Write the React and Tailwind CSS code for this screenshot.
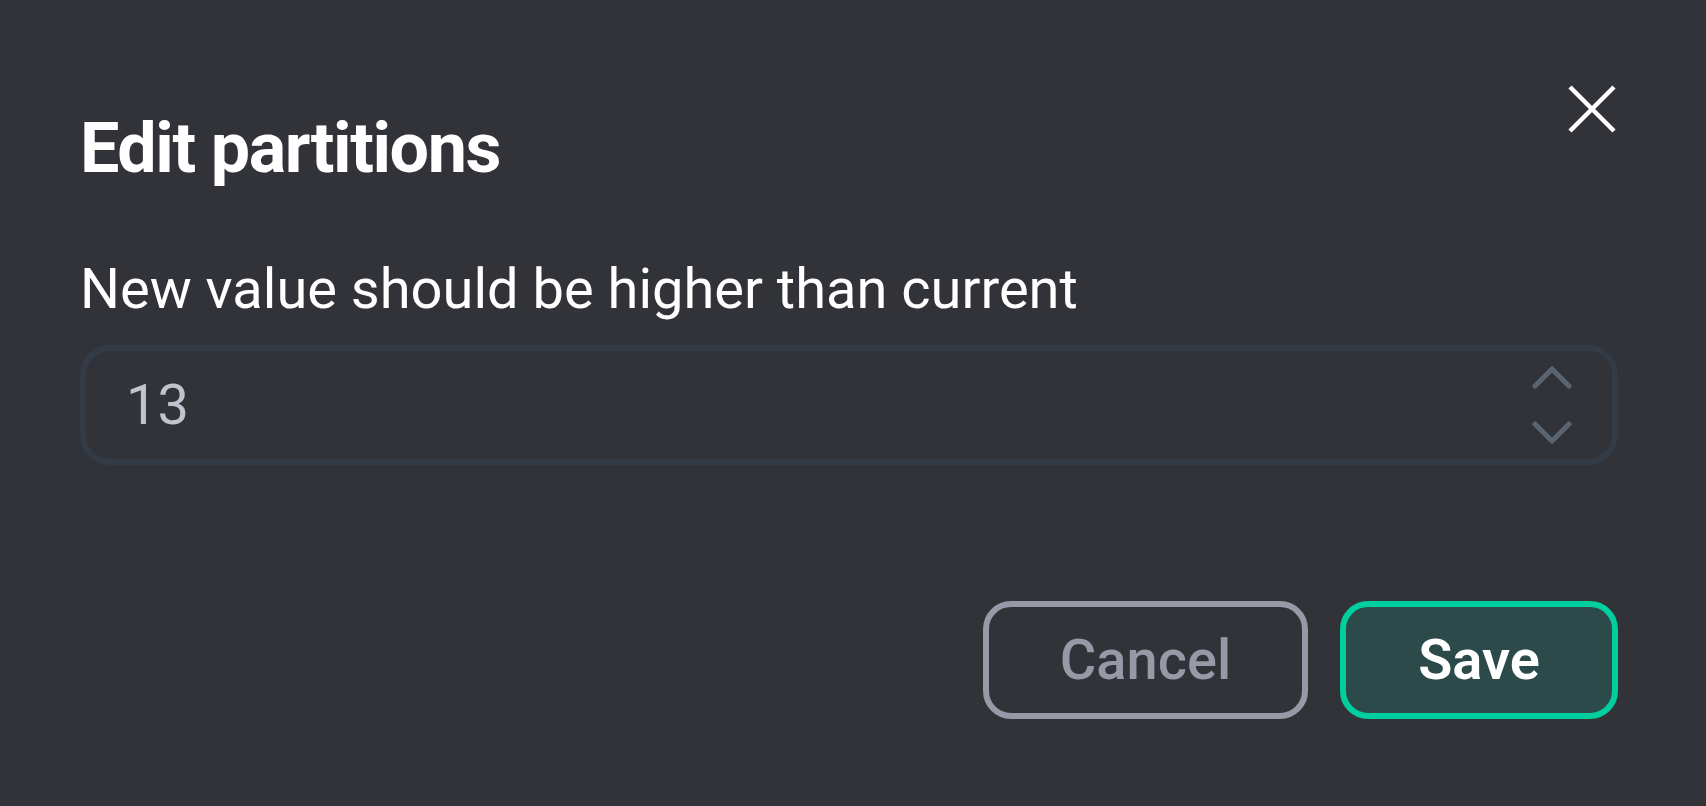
import { useState } from "react";

function CloseIcon() {
  return (
    <svg width="48" height="48" viewBox="0 0 48 48" fill="none">
      <path d="M2 2 L46 46 M46 2 L2 46" stroke="#ffffff" strokeWidth="4.5" />
    </svg>
  );
}

function Chevron({ up }) {
  return (
    <svg width="40" height="24" viewBox="0 0 40 24" fill="none">
      <path
        d={up ? "M3 21 L20 4 L37 21" : "M3 3 L20 20 L37 3"}
        stroke="#5b6571"
        strokeWidth="5"
        strokeLinecap="round"
        strokeLinejoin="round"
      />
    </svg>
  );
}

export default function App() {
  const [value, setValue] = useState(13);

  return (
    <div
      className="w-full h-[806px] bg-[#323339] text-white overflow-hidden flex flex-col pl-[80px] pr-[88px]"
      style={{ fontFamily: "Roboto, 'Liberation Sans', sans-serif" }}
    >
      {/* header */}
      <div className="flex items-start justify-between pt-[85px]">
        <h1 className="mt-[28px] text-[70px] leading-none font-bold tracking-[-1.4px]">
          Edit partitions
        </h1>
        <button className="mr-[2px]">
          <CloseIcon />
        </button>
      </div>

      {/* body */}
      <p className="mt-[78px] text-[56px] leading-none text-white">
        New value should be higher than current
      </p>

      <div className="mt-[28px] h-[120px] rounded-[30px] border-[6px] border-[#323b46] flex items-center pl-[40px] pr-[40px]">
        <span className="flex-1 text-[56px] leading-none text-[#c3c3cf]">{value}</span>
        <div className="flex flex-col items-center gap-[32px]">
          <button onClick={() => setValue(value + 1)} className="flex">
            <Chevron up />
          </button>
          <button onClick={() => setValue(value - 1)} className="flex">
            <Chevron />
          </button>
        </div>
      </div>

      {/* footer */}
      <div className="mt-[136px] flex justify-end gap-[32px]">
        <button className="w-[325px] h-[118px] rounded-[28px] border-[6px] border-[#9898a6] text-[#9898a6] text-[56px] font-medium leading-none">
          Cancel
        </button>
        <button className="w-[278px] h-[118px] rounded-[28px] border-[6px] border-[#00cf9d] bg-[#2c4a4a] text-white text-[56px] font-semibold leading-none">
          Save
        </button>
      </div>
    </div>
  );
}
